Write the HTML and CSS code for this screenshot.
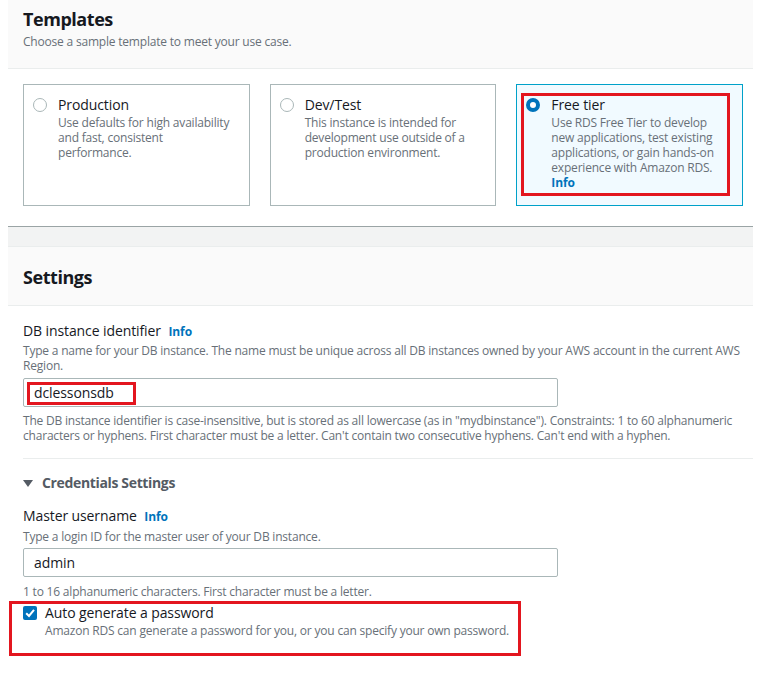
FILE: index.html
```html
<!DOCTYPE html>
<html lang="en">
<head>
<meta charset="utf-8">
<title>Create database</title>
<link rel="stylesheet" href="styles.css">
</head>
<body>
<div class="page">
  <section class="panel panel-templates">
    <header class="panel-header hdr-templates">
      <h2 class="panel-title">Templates</h2>
      <p class="hdr-desc">Choose a sample template to meet your use case.</p>
    </header>
    <div class="tiles">
      <div class="tile">
        <span class="radio"></span>
        <div class="tile-text">
          <div class="tile-title">Production</div>
          <div class="tile-desc">Use defaults for high availability and fast, consistent performance.</div>
        </div>
      </div>
      <div class="tile">
        <span class="radio"></span>
        <div class="tile-text">
          <div class="tile-title">Dev/Test</div>
          <div class="tile-desc">This instance is intended for development use outside of a production environment.</div>
        </div>
      </div>
      <div class="tile tile-selected">
        <span class="radio radio-on"></span>
        <div class="tile-text">
          <div class="tile-title">Free tier</div>
          <div class="tile-desc">Use RDS Free Tier to develop new applications, test existing applications, or gain hands-on experience with Amazon RDS. <a class="info">Info</a></div>
        </div>
        <span class="annot annot-tile"></span>
      </div>
    </div>
  </section>

  <div class="panel-gap"></div>

  <section class="panel panel-settings">
    <header class="panel-header hdr-settings">
      <h2 class="panel-title">Settings</h2>
    </header>
    <div class="settings-body">
      <div class="field">
        <div class="field-label">DB instance identifier <a class="info">Info</a></div>
        <div class="field-desc desc-db">Type a name for your DB instance. The name must be unique across all DB instances owned by your AWS account in the current AWS Region.</div>
        <div class="input-wrap input-db">
          <input class="text-input" type="text" value="dclessonsdb">
          <span class="annot annot-input"></span>
        </div>
        <div class="field-hint hint-db">The DB instance identifier is case-insensitive, but is stored as all lowercase (as in "mydbinstance"). Constraints: 1 to 60 alphanumeric characters or hyphens. First character must be a letter. Can't contain two consecutive hyphens. Can't end with a hyphen.</div>
      </div>

      <div class="divider"></div>

      <div class="expander">
        <svg class="caret" width="10" height="7" viewBox="0 0 10 7"><polygon points="0,0 10,0 5,7" fill="#545b64"/></svg>
        <span>Credentials Settings</span>
      </div>

      <div class="field field-master">
        <div class="field-label">Master username <a class="info">Info</a></div>
        <div class="field-desc desc-master">Type a login ID for the master user of your DB instance.</div>
        <div class="input-wrap input-master">
          <input class="text-input" type="text" value="admin">
        </div>
        <div class="field-hint hint-master">1 to 16 alphanumeric characters. First character must be a letter.</div>
      </div>

      <div class="check-row">
        <span class="checkbox">
          <svg width="14" height="14" viewBox="0 0 14 14"><polyline points="3.2,7.2 6,10 11,3.8" fill="none" stroke="#fff" stroke-width="2"/></svg>
        </span>
        <div class="check-text">
          <div class="check-label">Auto generate a password</div>
          <div class="check-desc">Amazon RDS can generate a password for you, or you can specify your own password.</div>
        </div>
        <span class="annot annot-check"></span>
      </div>
    </div>
  </section>
</div>
</body>
</html>
```

FILE: styles.css
```css
* { box-sizing: border-box; }

html, body {
  margin: 0;
  padding: 0;
  background: #ffffff;
}

body {
  font-family: "Open Sans", "Noto Sans", sans-serif;
  color: #16191f;
  letter-spacing: -0.1px;
}

.page {
  margin-left: 8px;
  width: 745px;
}

.panel-header {
  background: #fafafa;
  border-bottom: 1px solid #eaeded;
  padding-left: 15px;
}

.panel-title {
  margin: 0;
  font-size: 18px;
  line-height: 22px;
  font-weight: 700;
  letter-spacing: -0.45px;
  color: #16191f;
}

.hdr-templates {
  height: 69px;
  padding-top: 8px;
}

.hdr-desc {
  margin: 4px 0 0;
  font-size: 12px;
  line-height: 15px;
  letter-spacing: -0.2px;
  color: #687078;
}

.panel-templates {
  border-bottom: 1px solid #9aa4a5;
}

.tiles {
  display: grid;
  grid-template-columns: repeat(3, 1fr);
  column-gap: 20px;
  padding: 15px 10px 20px 15px;
}

.tile {
  position: relative;
  display: flex;
  gap: 11px;
  border: 1px solid #aab7b8;
  padding: 11px 12px 15px 9px;
  background: #fff;
}

.tile-selected {
  background: #f1faff;
  border-color: #00a1c9;
}

.radio {
  flex: none;
  width: 14px;
  height: 14px;
  margin-top: 2px;
  border: 1px solid #aab7b8;
  border-radius: 50%;
  background: #fff;
}

.radio-on {
  border: 4.5px solid #0073bb;
  background: #fff;
}

.tile-text {
  flex: 1;
  min-width: 0;
}

.tile-title {
  font-size: 14px;
  line-height: 18px;
  color: #16191f;
}

.tile-desc {
  margin-top: 1px;
  font-size: 12px;
  line-height: 15px;
  letter-spacing: -0.2px;
  color: #687078;
}

.info {
  font-size: 12px;
  font-weight: 700;
  letter-spacing: -0.1px;
  color: #0073bb;
  text-decoration: none;
}

.annot {
  position: absolute;
  border: 3px solid #e3161f;
  pointer-events: none;
}

.annot-tile {
  left: 4px;
  top: 8px;
  width: 209px;
  height: 103px;
}

.panel-gap {
  height: 19px;
  background: #f2f3f3;
}

.panel-settings {
  border-top: 1px solid #eaeded;
}

.hdr-settings {
  height: 59px;
  padding-top: 19px;
}

.settings-body {
  padding: 16px 0 40px 15px;
}

.field-label {
  font-size: 14px;
  line-height: 18px;
  color: #16191f;
}

.field-label .info {
  margin-left: 4px;
}

.field-desc,
.field-hint {
  font-size: 12px;
  line-height: 15px;
  letter-spacing: -0.2px;
  color: #687078;
}

.desc-db { margin-top: 2px; }
.desc-master { margin-top: 3px; }

.input-wrap {
  position: relative;
  width: 535px;
}

.input-db { margin-top: 5px; }
.input-master { margin-top: 4px; }

.text-input {
  display: block;
  width: 100%;
  height: 29px;
  margin: 0;
  padding: 0 10px;
  border: 1px solid #aab7b8;
  border-radius: 2px;
  background: #fff;
  font-family: "Open Sans", "Noto Sans", sans-serif;
  font-size: 14px;
  letter-spacing: -0.1px;
  color: #16191f;
  outline: none;
}

.annot-input {
  left: 4px;
  top: 4px;
  width: 109px;
  height: 23px;
}

.hint-db { margin-top: 6px; }
.hint-master { margin-top: 7px; }

.divider {
  margin-top: 15px;
  height: 1px;
  background: #eaeded;
}

.expander {
  margin-top: 15px;
  display: flex;
  align-items: center;
  gap: 9px;
  font-size: 14px;
  line-height: 18px;
  font-weight: 700;
  letter-spacing: -0.35px;
  color: #545b64;
}

.field-master {
  margin-top: 15px;
}

.check-row {
  position: relative;
  margin-top: 5px;
  display: flex;
  gap: 8px;
}

.checkbox {
  flex: none;
  width: 14px;
  height: 14px;
  margin-top: 2px;
  border-radius: 2px;
  background: #0073bb;
  display: flex;
}

.check-label {
  font-size: 14px;
  line-height: 18px;
  color: #16191f;
}

.check-desc {
  margin-top: 1px;
  font-size: 12px;
  line-height: 15px;
  letter-spacing: -0.2px;
  color: #687078;
}

.annot-check {
  left: -14px;
  top: -3px;
  width: 512px;
  height: 55px;
}
```
